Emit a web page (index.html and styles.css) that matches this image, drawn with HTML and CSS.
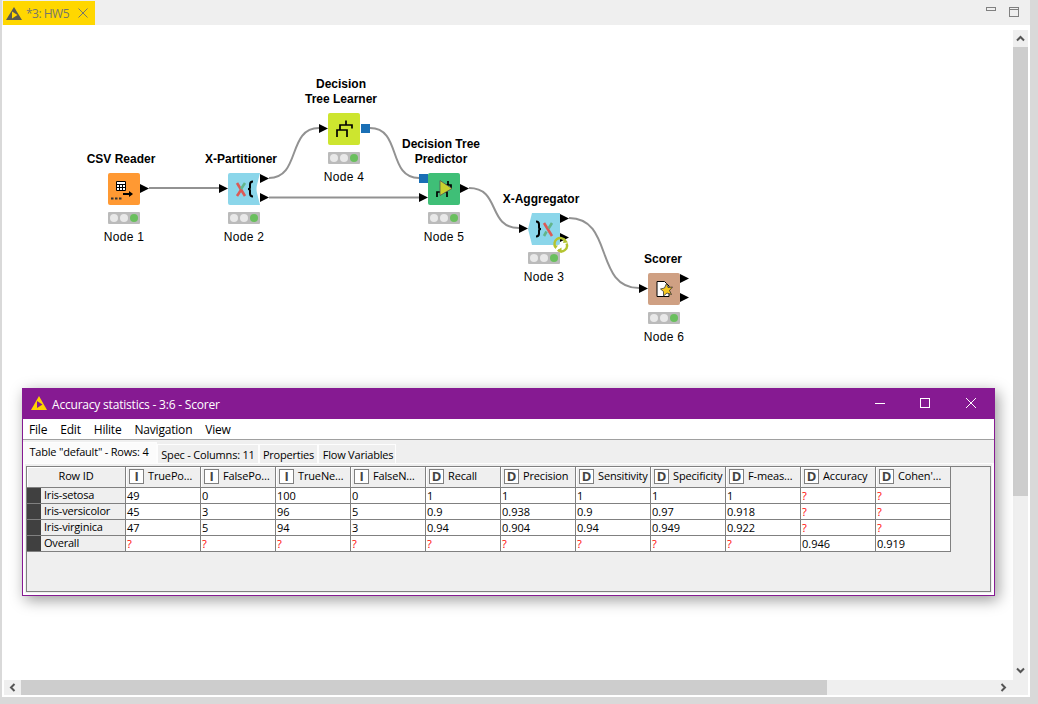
FILE: index.html
```html
<!DOCTYPE html>
<html lang="en">
<head>
  <meta charset="UTF-8" />
  <title>HW5</title>
  <link rel="stylesheet" href="styles.css">
</head>
<body>

<div class="workbench">
  <div class="editor-tabs">
    <div class="editor-tab">
      <svg class="tab-logo" width="16" height="13" viewBox="0 0 16 13"><path d="M8 0 16 13H0z" fill="#5a5a50"/><path d="M6 4.500 11.500 8 6 11.500z" fill="#ffd700"/></svg>
      <span class="tab-name">*3: HW5</span>
      <svg class="tab-close" width="10" height="10" viewBox="0 0 10 10"><path d="M.5.5l9 9M9.500.5l-9 9" stroke="#77776a" fill="none"/></svg>
    </div>
    <div class="editor-actions">
      <svg width="10" height="5" viewBox="0 0 10 5"><rect x=".5" y=".5" width="9" height="3" fill="none" stroke="#808080"/></svg>
      <svg width="11" height="11" viewBox="0 0 11 11"><rect x=".5" y=".5" width="9" height="9" fill="none" stroke="#808080"/><path d="M0 2.500h10" stroke="#808080"/></svg>
    </div>
  </div>

  <div class="editor-view">
    <div class="canvas">
      <svg class="wires" width="1009" height="650" viewBox="4 30 1009 650">
        <path d="M149 188H220"/>
        <path d="M269 178C301 178 287 128 319 128"/>
        <path d="M269 197.500H420"/>
        <path d="M370 128C402 128 387 178 419 178"/>
        <path d="M469 188C501 188 487 228 519 228"/>
        <path d="M569 218C614 218 594 288 639 288"/>
      </svg>

      <div class="node node-csv">
        <div class="node-title">CSV Reader</div>
        <div class="node-icon icon-orange">
          <svg width="32" height="32" viewBox="0 0 32 32">
            <path d="M8.500 8.500h9v9h-9zM8.500 11.500h9M8.500 14.500h9M11.500 11.500v6M14.500 11.500v6" fill="#fff" stroke="#000"/>
            <path d="M15 21h8" stroke="#000" stroke-width="2" fill="none"/>
            <path d="M21 18l4 3-4 3z" fill="#000"/>
            <path d="M3 25.500h2.500M7 25.500h2.500M11 25.500h2.500" stroke="#333" stroke-width="2" fill="none"/>
          </svg>
          <span class="port out mid"></span>
        </div>
        <div class="lights"><i></i><i></i><i class="on"></i></div>
        <div class="node-name">Node 1</div>
      </div>

      <div class="node node-part">
        <div class="node-title">X-Partitioner</div>
        <div class="node-icon">
          <svg width="32" height="32" viewBox="0 0 32 32">
            <path d="M2 0H32L29 12Q28 16 29 20L32 32H2Q0 32 0 30V2Q0 0 2 0z" fill="#8bd6ea"/>
            <path d="M9 10l8 13" stroke="#dc5a55" stroke-width="2.600" fill="none"/>
            <path d="M17 10l-4 6" stroke="#62b58a" stroke-width="2.600" fill="none"/>
            <path d="M13 17l-4 6" stroke="#dc5a55" stroke-width="2.600" fill="none"/>
            <path d="M25 8.500q-3 0-3 3v3q0 1.500-2 1.500 2 0 2 1.500v3q0 3 3 3" stroke="#000" stroke-width="2" fill="none"/>
          </svg>
          <span class="port in mid"></span>
          <span class="port out upper"></span>
          <span class="port out lower"></span>
        </div>
        <div class="lights"><i></i><i></i><i class="on"></i></div>
        <div class="node-name">Node 2</div>
      </div>

      <div class="node node-learner">
        <div class="node-title">Decision<br>Tree Learner</div>
        <div class="node-icon icon-lime">
          <svg width="32" height="32" viewBox="0 0 32 32">
            <path d="M18 7.500V12M12 17V12H24V15.500M9 24V17H19V24" stroke="#000" stroke-width="1.700" fill="none"/>
          </svg>
          <span class="port in mid"></span>
          <span class="port model-out"></span>
        </div>
        <div class="lights"><i></i><i></i><i class="on"></i></div>
        <div class="node-name">Node 4</div>
      </div>

      <div class="node node-predictor">
        <div class="node-title">Decision Tree<br>Predictor</div>
        <div class="node-icon icon-green">
          <svg width="32" height="32" viewBox="0 0 32 32">
            <path d="M20 8V12M14 17V12H23V16M9 24V19H19V24" stroke="#000" stroke-width="1.700" fill="none"/>
            <path d="M12 7.500 24 15.500 12 22.500z" fill="#c9d22e" stroke="#555" stroke-width=".8"/>
          </svg>
          <span class="port model-in"></span>
          <span class="port in lower"></span>
          <span class="port out mid"></span>
        </div>
        <div class="lights"><i></i><i></i><i class="on"></i></div>
        <div class="node-name">Node 5</div>
      </div>

      <div class="node node-aggregator">
        <div class="node-title">X-Aggregator</div>
        <div class="node-icon">
          <svg width="32" height="32" viewBox="0 0 32 32">
            <path d="M4 0H32V30Q32 32 30 32H4L0 16z" fill="#8bd6ea"/>
            <path d="M8 8.500q3 0 3 3v3q0 1.500 2 1.500-2 0-2 1.500v3q0 3-3 3" stroke="#000" stroke-width="2" fill="none"/>
            <path d="M16 10l8 13" stroke="#dc5a55" stroke-width="2.600" fill="none"/>
            <path d="M24 10l-3.500 5.500M18.500 18.500 16 23" stroke="#62b58a" stroke-width="2.600" fill="none"/>
          </svg>
          <span class="port in mid"></span>
          <span class="port out upper"></span>
          <span class="port out lower"></span>
          <svg class="loop-mark" width="18" height="18" viewBox="0 0 18 18">
            <path d="M3.500 11A5.500 5.500 0 0 1 13 4.500" stroke="#b4c430" stroke-width="2.400" fill="none"/>
            <path d="M14.500 7.500A5.500 5.500 0 0 1 6 14" stroke="#b4c430" stroke-width="2.400" fill="none"/>
            <path d="M1 9.500h5l-2.500 3.500zM9.500 11.500V17L5 14.500zM12.500 2 16 6.500 11 7z" fill="#b4c430"/>
          </svg>
        </div>
        <div class="lights"><i></i><i></i><i class="on"></i></div>
        <div class="node-name">Node 3</div>
      </div>

      <div class="node node-scorer">
        <div class="node-title">Scorer</div>
        <div class="node-icon icon-tan">
          <svg width="32" height="32" viewBox="0 0 32 32">
            <path d="M9 8.500H16.500L21 13V23.500H9z" fill="#fff" stroke="#000"/>
            <path d="M18.500 10.500 20 14.500 24.500 14 21.500 17.500 23.500 21.500 19 20 15.500 23 15.500 18.500 12.500 16 16.500 15z" fill="#f7c81e" stroke="#333" stroke-width=".8"/>
          </svg>
          <span class="port in mid"></span>
          <span class="port out upper"></span>
          <span class="port out lower"></span>
        </div>
        <div class="lights"><i></i><i></i><i class="on"></i></div>
        <div class="node-name">Node 6</div>
      </div>

      <div class="window">
        <div class="window-title">
          <svg class="window-logo" width="16" height="14" viewBox="0 0 16 14"><path d="M8 0 16 14H0z" fill="#ffd200"/><path d="M6 5 11.500 8.500 6 12z" fill="#861a92"/></svg>
          <span class="window-name">Accuracy statistics - 3:6 - Scorer</span>
          <div class="window-buttons">
            <svg width="10" height="10" viewBox="0 0 10 10"><path d="M0 5.500h10" stroke="#fff"/></svg>
            <svg width="10" height="10" viewBox="0 0 10 10"><rect x=".5" y=".5" width="9" height="9" fill="none" stroke="#fff"/></svg>
            <svg width="10" height="10" viewBox="0 0 10 10"><path d="M0 0l10 10M10 0L0 10" stroke="#fff"/></svg>
          </div>
        </div>

        <div class="menu">
          <span>File</span><span>Edit</span><span>Hilite</span><span>Navigation</span><span>View</span>
        </div>

        <div class="tabs">
          <div class="tab active">Table "default" - Rows: 4</div>
          <div class="tab tab-spec">Spec - Columns: 11</div>
          <div class="tab tab-props">Properties</div>
          <div class="tab tab-flow">Flow Variables</div>
        </div>

        <div class="pane">
          <div class="table-frame">
            <table class="stats">
              <thead>
                <tr>
                  <th class="row-id">Row ID</th>
                  <th><span class="col"><b>I</b>TruePo…</span></th>
                  <th><span class="col"><b>I</b>FalsePo…</span></th>
                  <th><span class="col"><b>I</b>TrueNe…</span></th>
                  <th><span class="col"><b>I</b>FalseN…</span></th>
                  <th><span class="col"><b>D</b>Recall</span></th>
                  <th><span class="col"><b>D</b>Precision</span></th>
                  <th><span class="col"><b>D</b>Sensitivity</span></th>
                  <th><span class="col"><b>D</b>Specificity</span></th>
                  <th><span class="col"><b>D</b>F-meas…</span></th>
                  <th><span class="col"><b>D</b>Accuracy</span></th>
                  <th><span class="col"><b>D</b>Cohen'…</span></th>
                </tr>
              </thead>
              <tbody>
                <tr>
                  <th class="row-head"><span class="row-label">Iris-setosa</span></th>
                  <td>49</td><td>0</td><td>100</td><td>0</td><td>1</td><td>1</td><td>1</td><td>1</td><td>1</td>
                  <td class="missing">?</td><td class="missing">?</td>
                </tr>
                <tr>
                  <th class="row-head"><span class="row-label">Iris-versicolor</span></th>
                  <td>45</td><td>3</td><td>96</td><td>5</td><td>0.9</td><td>0.938</td><td>0.9</td><td>0.97</td><td>0.918</td>
                  <td class="missing">?</td><td class="missing">?</td>
                </tr>
                <tr>
                  <th class="row-head"><span class="row-label">Iris-virginica</span></th>
                  <td>47</td><td>5</td><td>94</td><td>3</td><td>0.94</td><td>0.904</td><td>0.94</td><td>0.949</td><td>0.922</td>
                  <td class="missing">?</td><td class="missing">?</td>
                </tr>
                <tr>
                  <th class="row-head"><span class="row-label">Overall</span></th>
                  <td class="missing">?</td><td class="missing">?</td><td class="missing">?</td><td class="missing">?</td><td class="missing">?</td>
                  <td class="missing">?</td><td class="missing">?</td><td class="missing">?</td><td class="missing">?</td>
                  <td>0.946</td><td>0.919</td>
                </tr>
              </tbody>
            </table>
          </div>
        </div>
      </div>
    </div>

    <div class="vscroll">
      <div class="arrow-box"><svg width="9" height="7" viewBox="0 0 9 7"><path d="M1 5.500 4.500 2 8 5.500" stroke="#555" stroke-width="2" fill="none"/></svg></div>
      <div class="vthumb"></div>
      <div class="vtrack"><svg width="9" height="7" viewBox="0 0 9 7"><path d="M1 1.500 4.500 5 8 1.500" stroke="#555" stroke-width="2" fill="none"/></svg></div>
    </div>
    <div class="hscroll">
      <div class="arrow-box"><svg width="7" height="9" viewBox="0 0 7 9"><path d="M5.500 1 2 4.500 5.500 8" stroke="#555" stroke-width="2" fill="none"/></svg></div>
      <div class="hthumb"></div>
      <div class="htrack"><svg width="7" height="9" viewBox="0 0 7 9"><path d="M1.500 1 5 4.500 1.500 8" stroke="#555" stroke-width="2" fill="none"/></svg></div>
    </div>
    <div class="corner"></div>
  </div>
</div>

</body>
</html>
```

FILE: styles.css
```css
body {
  margin: 0;
  width: 1038px;
  height: 704px;
  overflow: hidden;
  background: #d9d9d9;
  font-family: 'Liberation Sans', Arial, sans-serif;
  color: #000;
}

.workbench {
  width: 1028px;
  height: 697px;
  margin-left: 2px;
  background: #fff;
  display: flex;
  flex-direction: column;
}

/* editor tab strip */
.editor-tabs {
  height: 25px;
  background: #efefef;
  display: flex;
  justify-content: space-between;
  flex: none;
}
.editor-tab {
  width: 92px;
  height: 24px;
  margin: 1px 0 0 1px;
  background: #ffd700;
  display: flex;
  align-items: center;
  font-family: 'Open Sans', sans-serif;
  font-size: 12px;
  letter-spacing: -0.5px;
  color: #77776a;
}
.tab-logo {
  margin-left: 3px;
}
.tab-name {
  margin-left: 4px;
}
.tab-close {
  margin-left: 9px;
}
.editor-actions {
  display: flex;
  align-items: flex-start;
  gap: 13px;
  padding: 7px 10px 0 0;
}

.editor-view {
  flex: 1;
  padding: 5px 2px 1px 2px;
  display: grid;
  grid-template-columns: 1009px 15px;
  grid-template-rows: 650px 15px;
}

/* workflow canvas */
.canvas {
  position: relative;
  background: #fff;
}
.wires {
  position: absolute;
  left: 0;
  top: 0;
}
.wires path {
  fill: none;
  stroke: #929292;
  stroke-width: 2;
}

.node {
  position: absolute;
  width: 120px;
  display: flex;
  flex-direction: column;
  align-items: center;
  font-size: 12px;
  line-height: 15px;
}
.node-csv { left: 60px; top: 122px; }
.node-part { left: 180px; top: 122px; }
.node-learner { left: 280px; top: 47px; }
.node-predictor { left: 380px; top: 107px; }
.node-aggregator { left: 480px; top: 162px; }
.node-scorer { left: 600px; top: 222px; }

.node-title {
  font-weight: bold;
  text-align: center;
  white-space: nowrap;
  margin-right: 6px;
}
.node-scorer .node-title {
  margin-right: 2px;
}
.node-icon {
  position: relative;
  width: 32px;
  height: 32px;
  margin-top: 6px;
  border-radius: 2px;
}
.node-icon > svg {
  display: block;
}
.icon-orange { background: #ff9933; }
.icon-lime { background: #cde52f; }
.icon-green { background: #3fbf77; }
.icon-tan { background: #cfa083; }

.port {
  position: absolute;
  width: 9px;
  height: 9px;
  background: #000;
  clip-path: polygon(0 0, 100% 50%, 0 100%);
}
.port.in { left: -9px; }
.port.out { left: 32px; }
.port.mid { top: 11px; }
.port.upper { top: 1px; }
.port.lower { top: 20px; }
.model-out,
.model-in {
  background: #1a6fb5;
  clip-path: none;
}
.model-out { left: 33px; top: 11px; }
.model-in { left: -9px; top: 1px; }

.node-icon > .loop-mark {
  position: absolute;
  left: 24px;
  top: 23px;
}

.lights {
  width: 32px;
  height: 12px;
  margin-top: 7px;
  background: #bbb;
  border-radius: 1px;
  display: flex;
  align-items: center;
  justify-content: center;
  gap: 2px;
}
.lights i {
  width: 8px;
  height: 8px;
  border-radius: 50%;
  background: #e8e8e8;
}
.lights .on {
  background: #6abf5e;
}
.node-name {
  margin-top: 5px;
  padding-top: 1px;
  letter-spacing: 0.3px;
}

/* results window */
.window {
  position: absolute;
  left: 18px;
  top: 358px;
  width: 973px;
  height: 208px;
  box-sizing: border-box;
  border: 1px solid #861a92;
  background: #fff;
  display: flex;
  flex-direction: column;
  box-shadow: 3px 4px 14px rgb(0 0 0 / 0.4);
  font-family: 'Open Sans', sans-serif;
  font-size: 11px;
}
.window-title {
  height: 30px;
  margin: 0 -1px;
  background: #861a92;
  color: #fff;
  display: flex;
  align-items: center;
  flex: none;
  font-size: 12px;
  letter-spacing: -0.2px;
}
.window-logo {
  margin: 0 0 2px 9px;
}
.window-name {
  margin-left: 5px;
}
.window-buttons {
  margin: 0 0 2px auto;
  padding-right: 19px;
  display: flex;
  gap: 36px;
}
.window-buttons svg {
  display: block;
}
.window-buttons svg:first-child {
  margin-right: -1px;
}
.menu {
  height: 20px;
  flex: none;
  border-bottom: 1px solid #a0a0a0;
  padding-left: 6px;
  display: flex;
  align-items: center;
  gap: 13px;
  font-size: 12px;
  letter-spacing: -0.2px;
}
.tabs {
  height: 23px;
  flex: none;
  background: #efefef;
  display: flex;
  align-items: flex-end;
  letter-spacing: -0.2px;
}
.tab {
  box-sizing: border-box;
  height: 19px;
  border: 1px solid #fdfdfd;
  border-bottom: 0;
  display: flex;
  align-items: center;
  justify-content: center;
  white-space: nowrap;
}
.tab.active {
  width: 134px;
  height: 21px;
  padding: 0 2px 3px 0;
  background: #fbfbfb;
}
.tab-spec { width: 102px; }
.tab-props { width: 59px; }
.tab-flow { width: 78px; padding-left: 2px; }

.pane {
  flex: 1;
  margin: 0 1px 1px;
  border: 1px solid #fdfdfd;
  padding: 2px 1px 1px;
  background: #efefef;
  display: flex;
}
.table-frame {
  flex: 1;
  border: 1px solid #808080;
  background: #efefef;
}

.stats {
  border-collapse: separate;
  border-spacing: 0;
  table-layout: fixed;
  width: 924px;
}
.stats th,
.stats td {
  box-sizing: border-box;
  width: 75px;
  height: 16px;
  padding: 0 0 0 1px;
  border-right: 1px solid #808080;
  border-bottom: 1px solid #808080;
  font-weight: normal;
  text-align: left;
  white-space: nowrap;
  overflow: hidden;
  line-height: 14px;
}
.stats td {
  background: #fff;
}
.stats thead th {
  height: 21px;
  padding: 0;
  background: #efefef;
  box-shadow: inset 1px 1px 0 #fff;
  vertical-align: top;
  letter-spacing: -0.15px;
}
.stats .row-id {
  width: 99px;
  text-align: center;
  line-height: 18px;
}
.col {
  display: flex;
  align-items: flex-start;
  gap: 4px;
  padding: 2px 0 0 3px;
  line-height: 13px;
}
.col b {
  box-sizing: border-box;
  width: 15px;
  height: 15px;
  flex: none;
  border: 1px solid #808080;
  background: #fff;
  color: #444;
  font-size: 13px;
  line-height: 13px;
  font-weight: bold;
  text-align: center;
}
.stats .row-head {
  width: 99px;
  padding: 0;
  background: #efefef;
  box-shadow: inset 14px 0 0 #404040;
  letter-spacing: -0.2px;
}
.row-label {
  display: block;
  height: 15px;
  line-height: 14px;
  padding-left: 3px;
  margin-left: 14px;
}
.stats .missing {
  color: #f00;
}

/* scrollbars */
.vscroll,
.hscroll,
.corner {
  background: #efefef;
}
.vscroll {
  display: flex;
  flex-direction: column;
}
.arrow-box {
  background: #efefef;
  display: flex;
  align-items: center;
  justify-content: center;
  flex: none;
}
.vscroll .arrow-box {
  height: 17px;
}
.vthumb {
  height: 449px;
  background: #cdcdcd;
}
.vtrack {
  flex: 1;
  display: flex;
  align-items: flex-end;
  justify-content: center;
  padding-bottom: 6px;
}
.hscroll {
  display: flex;
}
.hscroll .arrow-box {
  width: 17px;
}
.hthumb {
  width: 806px;
  background: #cdcdcd;
}
.htrack {
  flex: 1;
  display: flex;
  align-items: center;
  justify-content: flex-end;
  padding-right: 6px;
}
```
